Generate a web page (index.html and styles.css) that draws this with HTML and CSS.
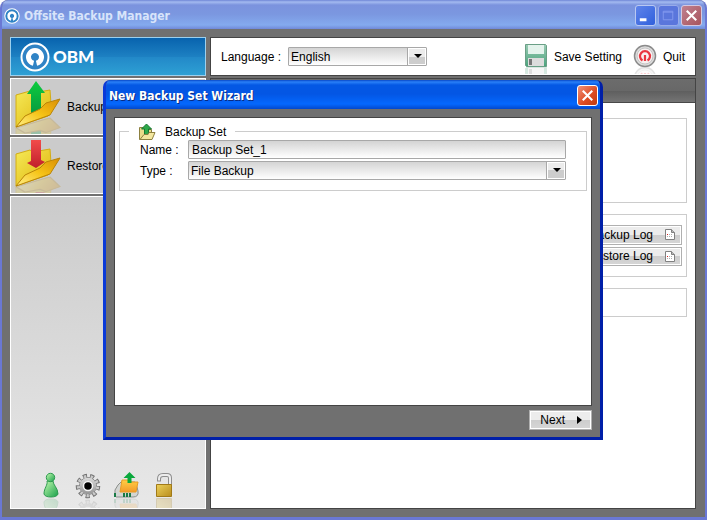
FILE: index.html
```html
<!DOCTYPE html>
<html lang="en">
<head>
    <meta charset="UTF-8">
    <meta name="viewport" content="width=device-width, initial-scale=1.0">
    <title>Offsite Backup Manager</title>
    <link rel="stylesheet" href="styles.css">
</head>
<body>
    <svg class="defs" aria-hidden="true">
        <defs>
            <linearGradient id="yellow" x1="0" y1="0" x2="1" y2="1">
                <stop offset="0" stop-color="#f5ea58"/>
                <stop offset="1" stop-color="#dfb40c"/>
            </linearGradient>
            <linearGradient id="flap" x1="1" y1="0" x2="0" y2="1">
                <stop offset="0" stop-color="#d98e04"/>
                <stop offset="0.5" stop-color="#f6c418"/>
                <stop offset="1" stop-color="#fff08a"/>
            </linearGradient>
            <linearGradient id="up" x1="0" y1="0" x2="0" y2="1">
                <stop offset="0" stop-color="#0ccc3c"/>
                <stop offset="1" stop-color="#079a42"/>
            </linearGradient>
            <linearGradient id="down" x1="0" y1="0" x2="0" y2="1">
                <stop offset="0" stop-color="#f24a4a"/>
                <stop offset="1" stop-color="#c0202c"/>
            </linearGradient>
            <linearGradient id="person" x1="0" y1="0" x2="1" y2="1">
                <stop offset="0" stop-color="#c4fab0"/>
                <stop offset="1" stop-color="#18a04a"/>
            </linearGradient>
            <linearGradient id="steel" x1="0" y1="0" x2="0" y2="1">
                <stop offset="0" stop-color="#dadada"/>
                <stop offset="1" stop-color="#949494"/>
            </linearGradient>
            <linearGradient id="orange" x1="0" y1="0" x2="0" y2="1">
                <stop offset="0" stop-color="#ffcf45"/>
                <stop offset="1" stop-color="#f39a2a"/>
            </linearGradient>
            <linearGradient id="gold" x1="0" y1="0" x2="1" y2="1">
                <stop offset="0" stop-color="#ecd05a"/>
                <stop offset="1" stop-color="#b98d1c"/>
            </linearGradient>
            <linearGradient id="disk" x1="0" y1="0" x2="0" y2="1">
                <stop offset="0" stop-color="#9acbb4"/>
                <stop offset="1" stop-color="#4aa37c"/>
            </linearGradient>
            <symbol id="ring" viewBox="0 0 30 30">
                <circle cx="15" cy="15" r="13.500" fill="#2f83c5" stroke="#fff" stroke-width="2"/>
                <path d="M13.500 21.300A6.500 6.500 0 1 1 16.500 21.300" fill="none" stroke="#fff" stroke-width="5"/>
            </symbol>
            <symbol id="page" viewBox="0 0 10 11">
                <path d="M.5.5h6l3 3v7h-9z" fill="#fff" stroke="#808080"/>
                <path d="M6.500.5v3h3" fill="#bbb" stroke="#808080"/>
                <path d="M4 5.500h4M2 7.500h6" stroke="#b0b0b0" stroke-dasharray="1 1"/>
                <path d="M2 5h1v1H2z" fill="#e02020"/>
            </symbol>
        </defs>
    </svg>

    <div class="window">
        <header class="titlebar">
            <svg class="title-icon" viewBox="0 0 30 30"><use href="#ring"/></svg>
            <h1>Offsite Backup Manager</h1>
            <button class="win-btn minimize" aria-label="Minimize"><svg viewBox="0 0 20 20"><path d="M4 13h7v3H4z" fill="#fff"/></svg></button>
            <button class="win-btn maximize" aria-label="Maximize" disabled><svg viewBox="0 0 20 20"><path d="M4.500 5.500h10v9h-10zM4 6.500h11" fill="none" stroke="#8298ee"/></svg></button>
            <button class="win-btn close" aria-label="Close"><svg viewBox="0 0 20 20"><path d="M5 5l10 10M15 5L5 15" stroke="#fff" stroke-width="2.200"/></svg></button>
        </header>

        <div class="client">
            <aside class="sidebar">
                <div class="logo">
                    <svg viewBox="0 0 30 30"><use href="#ring"/></svg>
                    <span>OBM</span>
                </div>
                <button class="nav-item">
                    <svg viewBox="0 0 50 55">
                        <g id="folder-up">
                            <path d="M5 16l14-4 3 2 17-3 1 14-3 12L5 48z" fill="url(#yellow)" stroke="#d3ac14"/>
                            <path d="M25 2l9 12h-4v17l-10 4V15h-4z" fill="url(#up)"/>
                            <path d="M5 48l9-11 15-7 6-6 14-4-10 16z" fill="url(#flap)" stroke="#b98509"/>
                        </g>
                        <use href="#folder-up" transform="matrix(1 -0.640 0 -1 0 100)" opacity="0.25"/>
                    </svg>
                    Backup
                </button>
                <button class="nav-item">
                    <svg viewBox="0 0 50 55">
                        <g id="folder-down">
                            <path d="M5 16l14-4 3 2 17-3 1 14-3 12L5 48z" fill="url(#yellow)" stroke="#d3ac14"/>
                            <path d="M5 48l9-11 15-7 6-6 14-4-10 16z" fill="url(#flap)" stroke="#b98509"/>
                            <path d="M20 2h10v20l4 2-9 6-9-5 4-2z" fill="url(#down)"/>
                        </g>
                        <use href="#folder-down" transform="matrix(1 -0.640 0 -1 0 100)" opacity="0.25"/>
                    </svg>
                    Restore
                </button>
                <div class="tools">
                    <button aria-label="User profile">
                        <svg viewBox="0 0 28 38">
                            <g id="user">
                                <path d="M11 11h6c0 4 5 7 5 13q-1 3-7 3t-7-3c0-6 4-9 3-13z" fill="url(#person)" stroke="#2e9a50"/>
                                <circle cx="14.500" cy="7.500" r="4.200" fill="url(#person)" stroke="#2e9a50"/>
                            </g>
                            <use href="#user" transform="matrix(1 0 0 -1 0 56)" opacity="0.18"/>
                        </svg>
                    </button>
                    <button aria-label="Options">
                        <svg viewBox="0 0 28 38">
                            <g id="gear">
                                <circle cx="14" cy="16" r="10" fill="none" stroke="#707070" stroke-width="4.500" stroke-dasharray="3.980 3"/>
                                <circle cx="14" cy="16" r="8.500" fill="none" stroke="#808080"/>
                                <circle cx="14" cy="16" r="9.500" fill="none" stroke="#cacaca" stroke-width="3.500" stroke-dasharray="2.300 4.330" stroke-dashoffset="-0.700"/>
                                <circle cx="14" cy="16" r="8.200" fill="url(#steel)"/>
                                <circle cx="14" cy="16" r="4.500" fill="#000" stroke="#f4f4f4" stroke-width="1.500"/>
                            </g>
                            <use href="#gear" transform="matrix(1 0 0 -1 0 58)" opacity="0.18"/>
                        </svg>
                    </button>
                    <button aria-label="Utilities">
                        <svg viewBox="0 0 28 38">
                            <g id="drive">
                                <path d="M3 26v-6l3-5 3-3h14l2 5 1 4q1 6-5 6H4z" fill="#d3d5d3" stroke="#8b8f8b"/>
                                <path d="M10 10h6l1 2h9l-2 10H8z" fill="url(#orange)" stroke="#e89c24"/>
                                <path d="M17.500 2l6 6h-4v5h-4V8h-4z" fill="#0aa83c"/>
                                <path d="M11 25h9M2 25h2" stroke="#187a44" stroke-width="4" stroke-dasharray="2 1"/>
                            </g>
                            <use href="#drive" transform="matrix(1 0 0 -1 0 56)" opacity="0.18"/>
                        </svg>
                    </button>
                    <button aria-label="Lock">
                        <svg viewBox="0 0 28 38">
                            <g id="lock">
                                <path d="M9 11.500V9q0-4 4-4h4q3 0 3 3v7" fill="none" stroke="#8d8d8d" stroke-width="4"/>
                                <path d="M9 10.500V9q0-4 4-4h4q3 0 3 3v7" fill="none" stroke="#ececec" stroke-width="2"/>
                                <path d="M6.500 14.500h15v12h-15z" fill="url(#gold)" stroke="#a17a18"/>
                            </g>
                            <use href="#lock" transform="matrix(1 0 0 -1 0 55)" opacity="0.25"/>
                        </svg>
                    </button>
                </div>
            </aside>

            <main class="main">
                <div class="toolbar">
                    <label for="language">Language :</label>
                    <div class="select language">
                        <select id="language"><option>English</option></select>
                    </div>
                    <button class="tool save">
                        <svg viewBox="0 0 26 34">
                            <g id="floppy">
                                <path d="M2.500 4.500h20l1 1v21h-20l-1-1z" fill="url(#disk)" stroke="#6a9f86"/>
                                <path d="M5 5h16v9H5z" fill="#e4f3ec"/>
                                <path d="M5 18h16v8H5z" fill="#dcdcdc"/>
                                <path d="M6 19h3v6H6z" fill="#777"/>
                            </g>
                            <use href="#floppy" transform="matrix(1 0 0 -1 0 54)" opacity="0.25"/>
                        </svg>
                        Save Setting
                    </button>
                    <button class="tool quit">
                        <svg viewBox="0 0 26 34">
                            <g id="power">
                                <circle cx="13" cy="16" r="10.500" fill="#dcdcdc" stroke="#8b8b8b" stroke-width="1.500"/>
                                <circle cx="13" cy="16" r="8" fill="#f8f0f0" stroke="#c4c4c4"/>
                                <path d="M10.500 20.500A5 5 0 1 1 15.500 20.500M13 15v6" fill="none" stroke="#ea3640" stroke-width="2.200"/>
                            </g>
                            <use href="#power" transform="matrix(1 0 0 -1 0 54)" opacity="0.25"/>
                        </svg>
                        Quit
                    </button>
                </div>
                <div class="page">
                    <div class="page-bar"></div>
                    <div class="page-body">
                        <section class="box box-info"></section>
                        <section class="box box-logs">
                            <button class="btn">Backup Log <svg viewBox="0 0 10 11"><use href="#page"/></svg></button>
                            <button class="btn">Restore Log <svg viewBox="0 0 10 11"><use href="#page"/></svg></button>
                        </section>
                        <section class="box box-status"></section>
                    </div>
                </div>
            </main>
        </div>
    </div>

    <div class="dialog" role="dialog" aria-labelledby="wizard-title">
        <header class="dialog-title">
            <h2 id="wizard-title">New Backup Set Wizard</h2>
            <button class="win-btn close-red" aria-label="Close"><svg viewBox="0 0 20 20"><path d="M5 5l10 10M15 5L5 15" stroke="#fff" stroke-width="2.200"/></svg></button>
        </header>
        <form class="dialog-body">
            <div class="wizard">
                <fieldset>
                    <legend>
                        <svg viewBox="0 0 18 18">
                            <path d="M1.500 4.500h4l2 2h6v10h-12z" fill="#e9dc8a" stroke="#8d8040"/>
                            <path d="M8.500 1l5 5h-3v6h-4V6h-3z" fill="#2fa84a" stroke="#157a30"/>
                            <path d="M2 16.500l4-5h4l1-2h6l-3 7z" fill="#f3e7a0" stroke="#8d8040"/>
                        </svg>
                        Backup Set
                    </legend>
                    <div class="row">
                        <label for="name">Name :</label>
                        <input id="name" type="text" value="Backup Set_1">
                    </div>
                    <div class="row">
                        <label for="type">Type :</label>
                        <div class="select">
                            <select id="type"><option>File Backup</option></select>
                        </div>
                    </div>
                </fieldset>
            </div>
            <div class="actions">
                <button class="btn next" type="button">Next <svg viewBox="0 0 5 8"><path d="M0 0l5 4-5 4z"/></svg></button>
            </div>
        </form>
    </div>
</body>
</html>
```
FILE: styles.css
```css
* {
    box-sizing: border-box;
}
body {
    margin: 0;
    padding-right: 1px;
    background: #fff;
    font-family: "Liberation Sans", Arial, sans-serif;
    font-size: 12px;
    color: #000;
}
button, input, select {
    font: inherit;
    color: inherit;
    margin: 0;
}
button {
    padding: 0;
    border: none;
    background: none;
}
svg {
    display: block;
    flex: none;
}
h1, h2 {
    margin: 0;
    flex: 1;
    font-family: "DejaVu Sans Condensed", "DejaVu Sans", sans-serif;
    font-size: 12px;
    font-weight: bold;
}
.defs {
    position: absolute;
    width: 0;
    height: 0;
}

/* main window */
.window {
    display: flex;
    flex-direction: column;
    min-height: 100vh;
    border: solid #6a78d4;
    border-width: 0 2px 3px;
    border-radius: 8px 8px 0 0;
    background: #707070;
    overflow: hidden;
}
.titlebar {
    display: flex;
    align-items: center;
    gap: 2px;
    height: 29px;
    padding: 2px 3px 0 2px;
    background: linear-gradient(#6f86d6, #a3baf0 2px, #7b93de 5px, #7b97e0 14px, #84aaee 25px, #7088d8);
    color: #d8e4fa;
}
.title-icon {
    width: 16px;
    height: 16px;
    margin-right: 2px;
}
.win-btn {
    width: 21px;
    height: 21px;
    border: 1px solid #fff;
    border-radius: 3px;
}
.win-btn svg {
    width: 19px;
    height: 19px;
}
.minimize {
    border-color: #b9c8f2;
    background: linear-gradient(135deg, #5f84ea, #3060dc);
}
.maximize {
    border-color: #98abea;
    background: #5a76dc;
}
.close {
    border-color: #d4c8e0;
    background: linear-gradient(135deg, #c08090, #a8545c);
}
.close-red {
    background: linear-gradient(135deg, #f09078, #dc4a20 60%, #c03c10);
}
.client {
    display: flex;
    flex: 1;
    gap: 4px;
    padding: 8px 9px 8px 8px;
}

/* sidebar */
.sidebar {
    display: flex;
    flex-direction: column;
    gap: 2px;
    width: 196px;
}
.logo {
    display: flex;
    align-items: center;
    gap: 3px;
    height: 39px;
    padding-left: 9px;
    border: 1px solid #9cd0ee;
    background: linear-gradient(#0863ae, #1d80c2 50%, #2288c8 51%, #2ea0d4);
    color: #fff;
    font: 900 17px Lato, sans-serif;
}
.logo svg {
    width: 30px;
    height: 30px;
}
.nav-item {
    display: flex;
    align-items: center;
    gap: 6px;
    height: 57px;
    border: 1px solid #fff;
    background: #cbcbcb;
}
.nav-item svg {
    width: 50px;
    height: 55px;
}
.tools {
    display: flex;
    flex: 1;
    align-items: flex-end;
    justify-content: center;
    gap: 10px;
    padding-right: 2px;
    border: 1px solid #fff;
    background: linear-gradient(#cbcbcb, #e8e8e8);
}
.tools svg {
    width: 28px;
    height: 38px;
}

/* main area */
.main {
    display: flex;
    flex: 1;
    flex-direction: column;
    gap: 2px;
}
.toolbar {
    display: flex;
    align-items: center;
    height: 39px;
    padding: 0 10px;
    border: 1px solid #444;
    background: #fff;
}
.language {
    width: 139px;
    margin: 0 auto 0 7px;
}
.tool {
    display: flex;
    align-items: center;
    gap: 5px;
}
.tool svg {
    width: 26px;
    height: 34px;
}
.quit {
    margin-left: 10px;
}
.page {
    flex: 1;
    border: 1px solid #444;
    background: #fff;
}
.page-bar {
    height: 24px;
    border-bottom: 1px solid #484848;
    background: linear-gradient(#6c6c6c, #686868 50%, #5e5e5e 51%, #747474);
}
.page-body {
    display: flex;
    flex-direction: column;
    gap: 11px;
    padding: 15px 8px;
}
.box {
    border: 1px solid #ccc;
}
.box-info {
    height: 85px;
}
.box-logs {
    display: flex;
    flex-direction: column;
    align-items: flex-end;
    gap: 2px;
    height: 63px;
    padding: 10px 4px;
}
.box-status {
    height: 29px;
}
.btn {
    display: flex;
    align-items: center;
    justify-content: flex-end;
    height: 20px;
    border: 1px solid #b0b0b0;
    box-shadow: inset 0 0 0 1px #fff;
    background: linear-gradient(#ececec 50%, #cdcdcd 50%, #d6d6d6);
}
.box-logs .btn {
    width: 110px;
    gap: 12px;
    padding-right: 6px;
}
.box-logs svg {
    width: 10px;
    height: 11px;
}

/* form controls */
.select {
    position: relative;
    height: 19px;
}
.select select,
input {
    width: 100%;
    height: 19px;
    padding: 0 3px;
    border: 1px solid #a8a8a8;
    border-radius: 1px;
    background: linear-gradient(#d4d4d4, #fff);
    appearance: none;
    outline: none;
}
.select select {
    padding-left: 2px;
}
.select::before {
    content: "";
    position: absolute;
    top: 1px;
    right: 1px;
    width: 18px;
    height: 17px;
    border-left: 1px solid #a8a8a8;
    box-shadow: inset 0 0 0 1px #fff;
    background: linear-gradient(#ececec 50%, #cdcdcd 50%);
    pointer-events: none;
}
.select::after {
    content: "";
    position: absolute;
    top: 7px;
    right: 5px;
    border: 4px solid transparent;
    border-top-color: #000;
    border-bottom: none;
    pointer-events: none;
}

/* wizard dialog */
.dialog {
    position: fixed;
    inset: 80px 105px 80px 103px;
    display: flex;
    flex-direction: column;
    border: solid #0a3ad8;
    border-width: 0 3px 3px;
    border-right-color: #001fa8;
    border-bottom-color: #001fa8;
    border-radius: 7px 7px 0 0;
    background: #707070;
    overflow: hidden;
}
.dialog-title {
    display: flex;
    align-items: center;
    height: 29px;
    padding: 2px 2px 0 3px;
    background: linear-gradient(#0848c8, #2a80f8 2px, #0458e4 5px, #0456e4 14px, #0468fe 24px, #0348cc);
    color: #fff;
    text-shadow: 1px 1px #0a2a80;
}
.dialog-body {
    display: flex;
    flex: 1;
    flex-direction: column;
    gap: 4px;
    padding: 8px 8px 7px;
}
.wizard {
    flex: 1;
    padding: 5px 4px;
    border: 1px solid #444;
    background: #fff;
}
fieldset {
    margin: 0;
    padding: 0 20px 10px;
    border: 1px solid #ccc;
}
legend {
    display: flex;
    align-items: center;
    gap: 9px;
    height: 17px;
    margin-left: -11px;
    padding: 0 9px;
}
legend svg {
    width: 18px;
    height: 18px;
}
.row {
    display: grid;
    grid-template-columns: 48px 1fr;
    align-items: center;
}
.row + .row {
    margin-top: 2px;
}
.actions {
    display: flex;
    justify-content: flex-end;
}
.next {
    width: 63px;
    gap: 12px;
    padding-right: 9px;
}
.next svg {
    width: 5px;
    height: 8px;
}
```
